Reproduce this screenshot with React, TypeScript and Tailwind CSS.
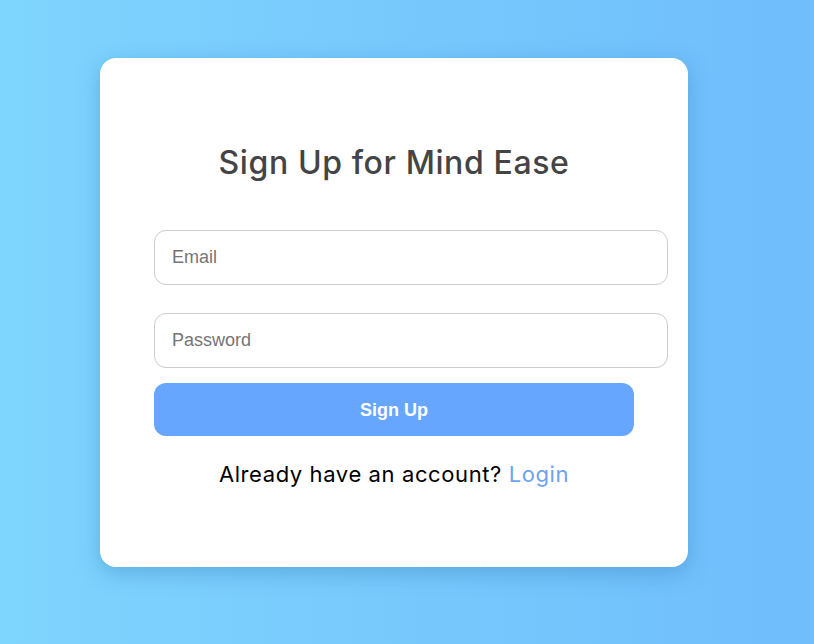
export default function App() {
  return (
    <div className="min-h-[644px] w-full bg-gradient-to-r from-[#7ed5fd] to-[#70bdfc] pt-[58px] pl-[100px]">
      <div className="w-[588px] h-[509px] bg-white rounded-[16px] shadow-[0_6px_22px_rgba(40,110,170,0.35)] px-[54px] pt-[85px]">
        <h1 className="text-center text-[#444444] text-[32px] leading-[40px] font-medium tracking-[0.6px] font-['Inter',sans-serif]">
          Sign Up for Mind Ease
        </h1>
        <form className="mt-[47px] flex flex-col" onSubmit={e => e.preventDefault()}>
          <input
            type="email"
            placeholder="Email"
            className="w-[514px] h-[55px] px-[17px] border border-[#cccccc] rounded-[12px] text-lg font-['Liberation_Sans',Arial,sans-serif] placeholder:text-[#757575] outline-none"
          />
          <input
            type="password"
            placeholder="Password"
            className="mt-[28px] w-[514px] h-[55px] px-[17px] border border-[#cccccc] rounded-[12px] text-lg font-['Liberation_Sans',Arial,sans-serif] placeholder:text-[#757575] outline-none"
          />
          <button
            type="submit"
            className="mt-[15px] w-full h-[53px] rounded-[12px] bg-[#66a6fe] text-white text-lg font-bold font-['Liberation_Sans',Arial,sans-serif]"
          >
            Sign Up
          </button>
        </form>
        <p className="mt-[23px] text-center text-black text-[22px] leading-[30px] tracking-[0.6px] font-['Inter',sans-serif]">
          Already have an account? <a href="#" className="text-[#6aa4f2]">Login</a>
        </p>
      </div>
    </div>
  );
}
